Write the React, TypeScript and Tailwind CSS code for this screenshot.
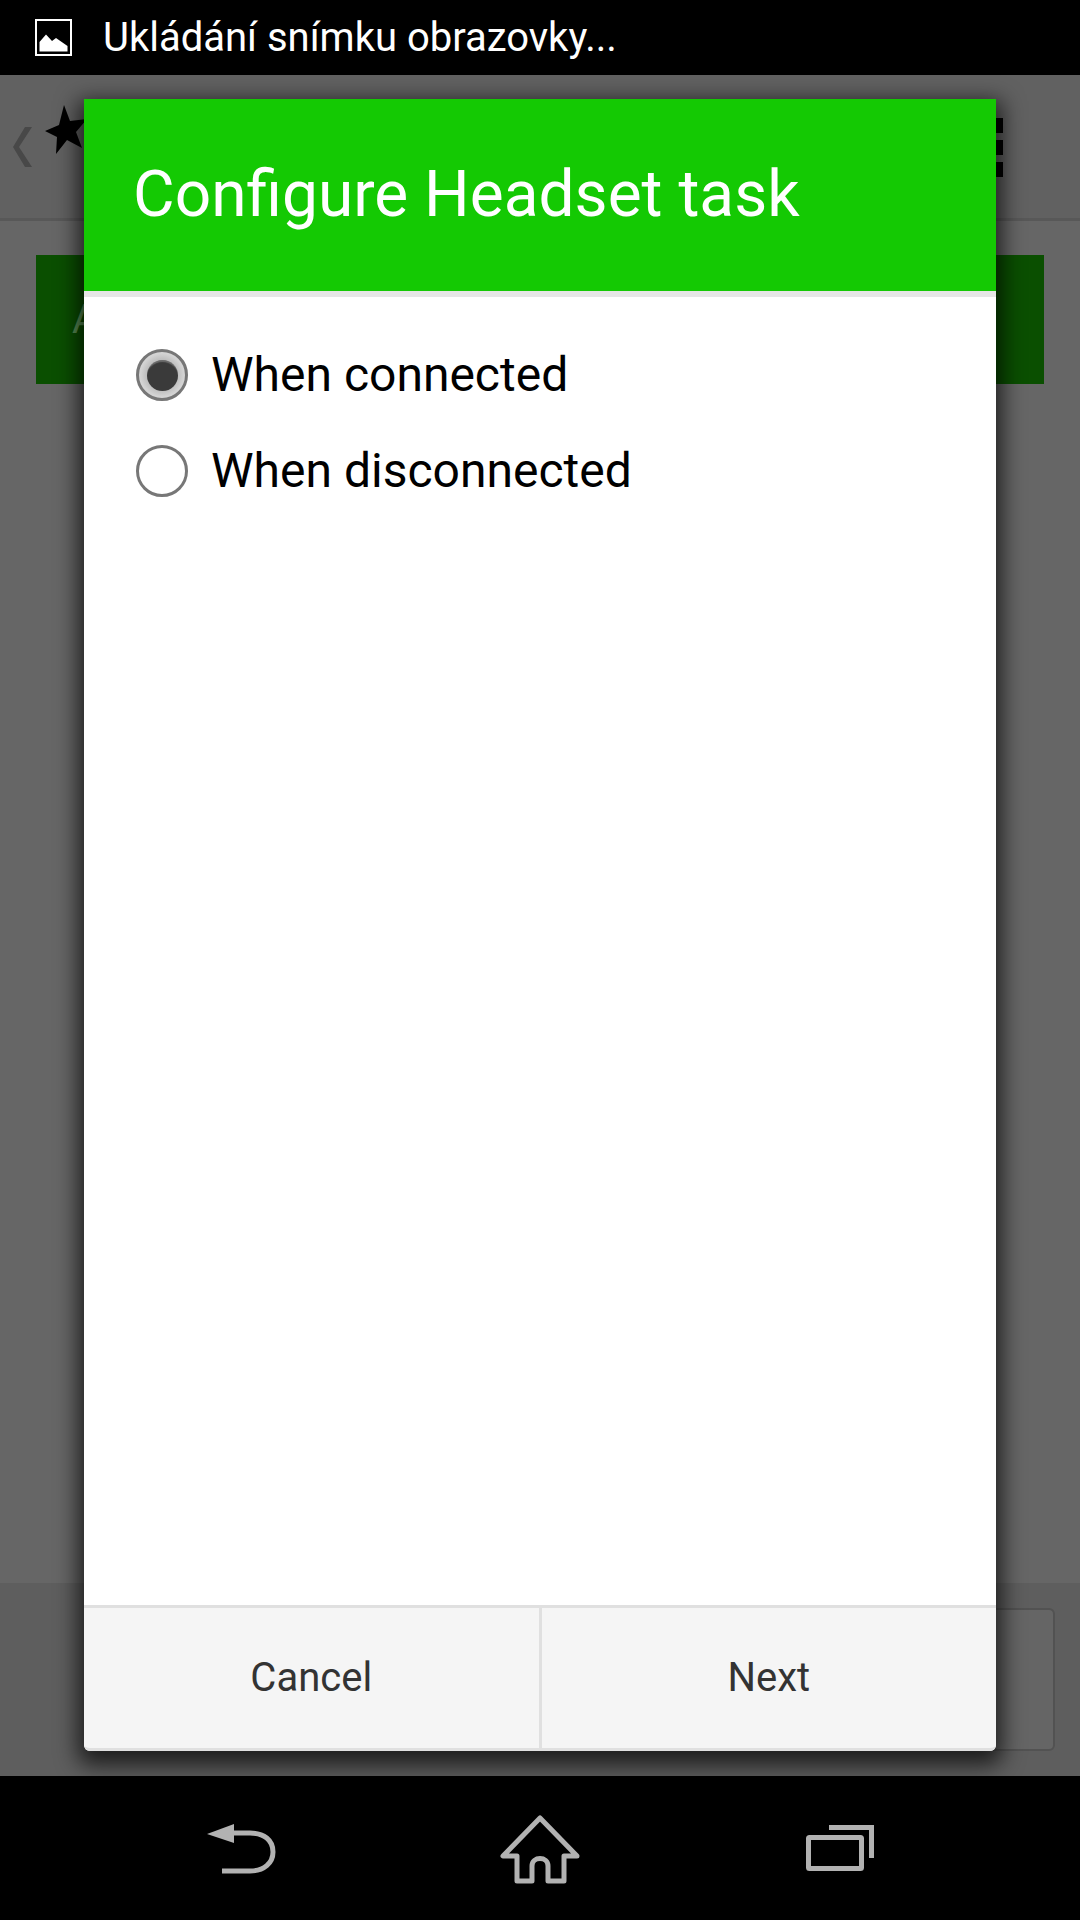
export default function App() {
  const font = { fontFamily: 'Roboto, sans-serif' };
  return (
    <div className="relative flex h-[1920px] w-[1080px] flex-col overflow-hidden bg-black" style={font}>
      {/* status bar */}
      <div className="flex h-[75px] shrink-0 items-center bg-black pl-[35px]">
        <svg width="38" height="38" viewBox="0 0 38 38" className="shrink-0">
          <rect x="1" y="1" width="35" height="35" fill="none" stroke="#fff" strokeWidth="2" />
          <path d="M4.5 32.5V23L11 15.5L17 22L21 19L32.5 27V32.5Z" fill="#fff" />
        </svg>
        <span className="ml-[30px] whitespace-nowrap text-[40px] leading-none text-white">Ukládání snímku obrazovky...</span>
      </div>

      {/* dimmed page */}
      <div className="flex flex-1 flex-col bg-[#666666]">
        <div className="flex h-[146px] shrink-0 items-start justify-between border-b-[3px] border-[#585858] bg-[#616161] pr-[77px]">
          <div className="flex items-start pl-3">
            <svg width="22" height="44" viewBox="0 0 22 44" className="mt-[50px]">
              <path d="M20 2L7 22L20 42H13L1 22L13 2Z" fill="#484848" />
            </svg>
            <svg width="44" height="56" viewBox="0 0 44 56" className="ml-[10px] mt-[29px]">
              <path d="M20 1L26 17L43 15L32 28L38 44L23 36L12 50L13 33L1 27L15 21Z" fill="#000" />
            </svg>
          </div>
          <div className="mt-[43px] flex w-[40px] flex-col gap-[7px]">
            <div className="h-[15px] bg-black" />
            <div className="h-[15px] bg-black" />
            <div className="h-[15px] bg-black" />
          </div>
        </div>
        <div className="mx-9 mt-[34px] flex h-[129px] shrink-0 items-center bg-[#0a4f00] pl-[36px] text-[40px] text-[#5b8f55]">
          A
        </div>
        <div className="flex-1" />
        <div className="flex h-[193px] shrink-0 items-start justify-end bg-[#5e5e5e] pr-[25px] pt-[25px]">
          <div className="h-[143px] w-[800px] rounded-[6px] border-2 border-[#525252] bg-[#656565]" />
        </div>
      </div>

      {/* navigation bar */}
      <div className="relative flex h-[144px] shrink-0 bg-black">
        <svg width="1080" height="144" viewBox="0 1776 1080 144" className="block">
          <path d="M207 1834L234 1824V1843Z" fill="#b2b2b2" />
          <path d="M232 1833H250C264 1833 273 1840 273 1852C273 1863 264 1871 250 1871H222" fill="none" stroke="#b2b2b2" strokeWidth="5" />
          <path d="M540 1818L503 1856H517V1881H532V1866C532 1856 548 1856 548 1866V1881H564V1856H577Z" fill="none" stroke="#b2b2b2" strokeWidth="5" strokeLinejoin="round" />
          <rect x="808.5" y="1837.5" width="53" height="31" rx="1" fill="none" stroke="#b2b2b2" strokeWidth="5" />
          <path d="M829 1827.5H871.5V1858" fill="none" stroke="#b2b2b2" strokeWidth="5" />
        </svg>
      </div>

      {/* dialog */}
      <div className="absolute left-[84px] top-[99px] flex h-[1652px] w-[912px] flex-col overflow-visible rounded-b-[6px] bg-white shadow-[0_8px_22px_6px_rgba(0,0,0,0.7)]">
        <div className="flex h-[192px] shrink-0 items-center bg-[#14c903] pl-[49px] text-[64px] leading-none text-white">
          Configure Headset task
        </div>
        <div className="h-[6px] shrink-0 bg-[#e6e6e6]" />
        <div className="flex flex-1 flex-col pl-[52px] pt-[30px]">
          <div className="flex h-[96px] items-center">
            <div className="flex h-[52px] w-[52px] items-center justify-center rounded-full border-[3px] border-[#777777] bg-[radial-gradient(circle,#888_0%,#d2d2d2_65%,#e8e8e8_100%)]">
              <div className="h-[31px] w-[31px] rounded-full bg-[#3a3a3a] shadow-[inset_0_3px_1px_-1px_rgba(255,255,255,0.25)]" />
            </div>
            <span className="ml-[23px] text-[48px] leading-none text-black">When connected</span>
          </div>
          <div className="flex h-[96px] items-center">
            <div className="h-[52px] w-[52px] rounded-full border-[3px] border-[#777777]" />
            <span className="ml-[23px] text-[48px] leading-none text-black">When disconnected</span>
          </div>
        </div>
        <div className="flex h-[146px] shrink-0 rounded-b-[6px] border-y-[3px] border-y-[#e0e0e0] bg-[#f5f5f5] text-[40px] leading-none text-[#333333]">
          <div className="flex flex-1 items-center justify-center border-r-[3px] border-[#e0e0e0]">Cancel</div>
          <div className="flex flex-1 items-center justify-center">Next</div>
        </div>
      </div>
    </div>
  );
}
